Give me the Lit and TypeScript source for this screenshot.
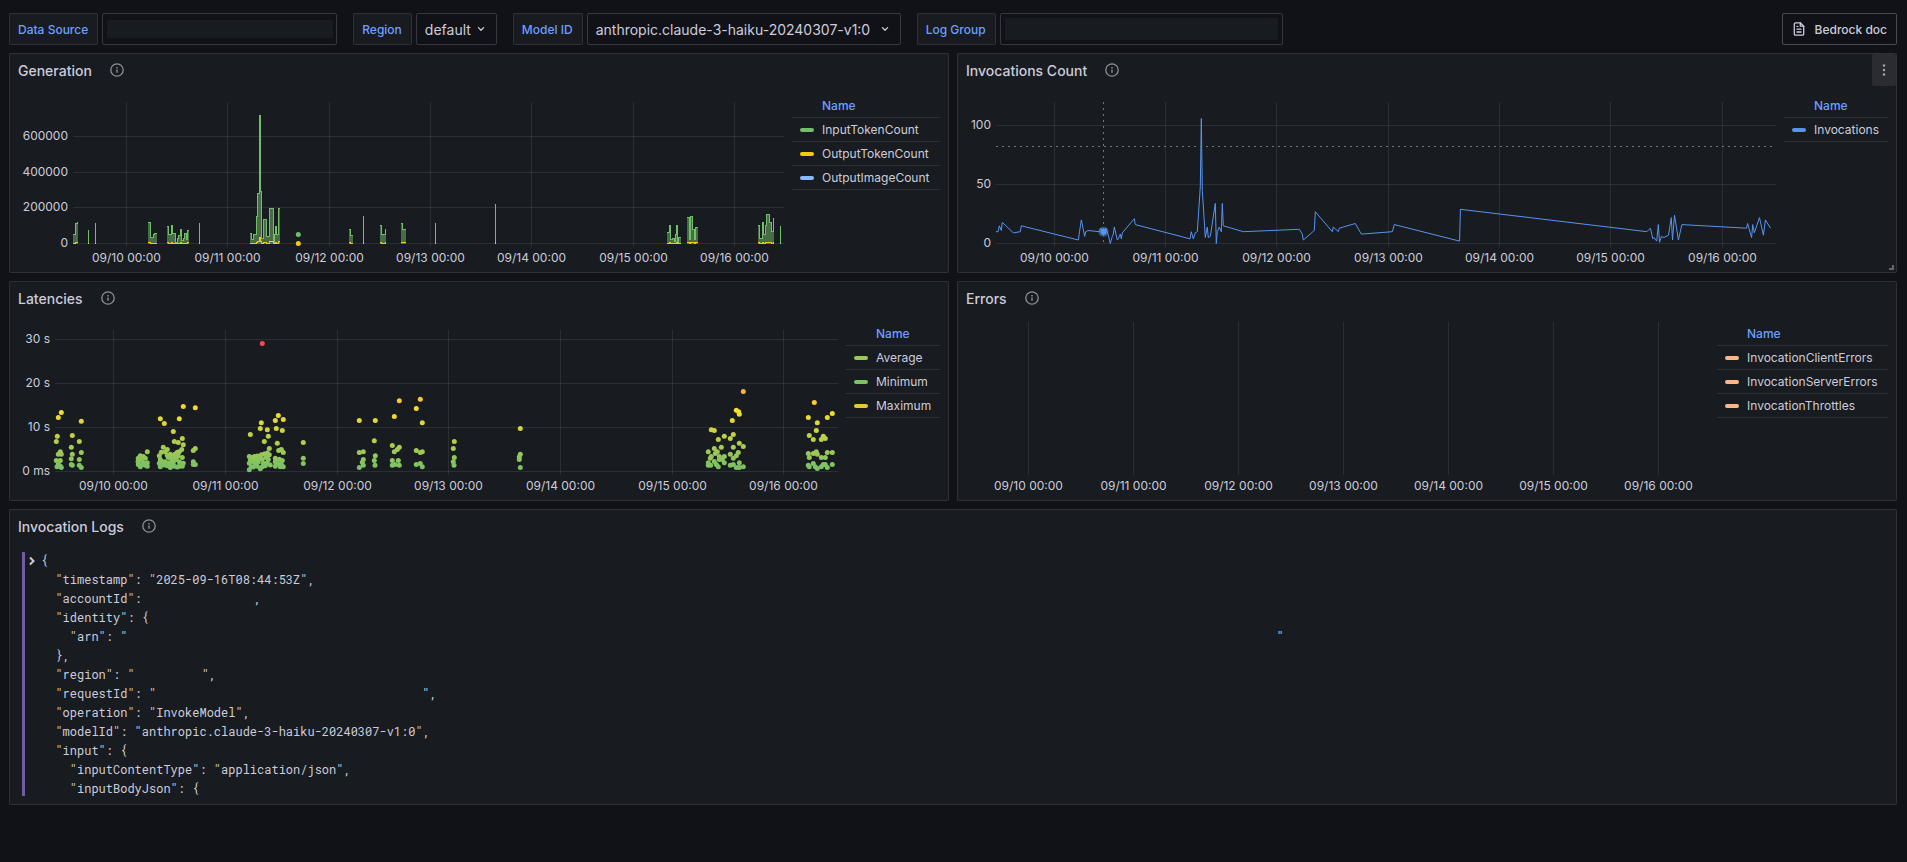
import { LitElement, html, svg, css, nothing } from "lit";
import { customElement, property, state } from "lit/decorators.js";
import { styleMap } from "lit/directives/style-map.js";

type Point = [number, number];

interface Series {
  name: string;
  color: string;
}

interface Tick {
  value: number;
  label: string;
}

interface ChartSpec {
  kind: "steps" | "line" | "points" | "empty";
  span: number;
  max: number;
  gutter: number;
  yTicks: Tick[];
}

const DAYS = ["09/10", "09/11", "09/12", "09/13", "09/14", "09/15", "09/16"];
const RANGE_DAYS = 7.01;
const FIRST_MIDNIGHT = 0.525;

/* Token counts, in thousands: each run is a list of [start, value] steps. */
const TOKEN_RUNS: { steps: Point[]; end: number }[] = [
  { steps: [[0, 50], [2.3, 112], [4, 120]], end: 4.6 },
  { steps: [[15.3, 75]], end: 15.3 },
  { steps: [[22.5, 114]], end: 22.5 },
  { steps: [[75.3, 118], [77.7, 34], [80.3, 49], [81.7, 56]], end: 83.7 },
  {
    steps: [
      [94.3, 96], [95.7, 50], [98.3, 101], [99.7, 56], [102.7, 5], [104.3, 30], [105.3, 45],
      [107, 79], [108.3, 18], [110.7, 30], [111.3, 56], [113, 22], [114.3, 73],
    ],
    end: 115.7,
  },
  { steps: [[126.3, 114]], end: 126.3 },
  {
    steps: [
      [177.3, 56], [178.7, 22], [180.3, 50], [183, 154], [184.3, 281], [186.3, 719], [187.7, 292],
      [188.7, 30], [190.3, 135], [193.7, 41], [196.3, 197], [200.7, 5], [201.7, 50], [202.3, 96],
      [203.7, 50], [205.3, 197],
    ],
    end: 206.7,
  },
  { steps: [[276, 79], [277, 45]], end: 279.7 },
  { steps: [[290.3, 154]], end: 290.3 },
  { steps: [[307, 101], [308.7, 50], [312.3, 79]], end: 313 },
  { steps: [[328, 114], [329, 79]], end: 332.7 },
  { steps: [[362.3, 118]], end: 362.3 },
  { steps: [[422.5, 221]], end: 422.5 },
  {
    steps: [
      [594.3, 60], [596.3, 101], [597.7, 22], [599.3, 28], [601, 13], [602.3, 50], [603.3, 101],
      [604.7, 8], [605.7, 34],
    ],
    end: 607.7,
  },
  { steps: [[614.3, 146], [616.3, 20], [617, 152], [619.7, 79], [621.7, 20], [622.7, 90]], end: 624.7 },
  {
    steps: [
      [685.3, 101], [686.7, 28], [689.3, 118], [690.7, 50], [692.3, 101], [693.3, 163],
      [696.7, 118], [698.7, 67], [700, 140],
    ],
    end: 700.7,
  },
  { steps: [[707.3, 101]], end: 707.3 },
];

const LONE_SAMPLE: Point = [225.3, 50];
const OUTPUT_RATIO = 0.045;

const INVOCATIONS: Point[] = [
  [0, 10], [2, 10], [3.3, 15], [5.3, 11], [6.3, 18], [17.3, 9], [24.3, 10], [25.3, 15], [82.3, 3],
  [85.3, 20], [88.7, 6], [89.7, 10], [92, 11], [103.3, 10], [104.7, 13], [107.7, 10], [110, 13],
  [112, 8], [114.3, 0], [116.3, 6], [117.3, 8], [118.3, 14], [121.3, 3], [122.3, 4], [124.3, 8],
  [125.3, 4], [126.3, 9], [138.3, 21], [139.3, 16], [194, 4], [195.3, 10], [197.3, 4], [199.3, 9],
  [201.3, 10], [204.3, 48], [205.3, 106], [206.3, 45], [209.3, 5], [211.3, 14], [212.3, 5],
  [214.3, 6], [219.3, 34], [220.3, 0], [221.3, 10], [223.3, 14], [225.3, 10], [226.3, 34],
  [227.3, 15], [247.3, 10], [303.3, 12], [306.3, 8], [307.3, 3], [318.3, 11], [319.3, 27],
  [336.3, 10], [337.3, 14], [342.3, 10], [343.3, 13], [359.3, 17], [365.3, 8], [396.3, 10],
  [398.3, 16], [463.6, 2], [464.4, 29], [650.9, 10], [654.4, 13], [656.8, 4], [658, 5],
  [660.7, 2], [662.3, 16], [663.5, 1], [665.5, 6], [667.8, 5], [672.5, 7], [675.3, 22],
  [676.5, 3], [678.5, 24], [682.4, 3], [685.9, 16], [750.5, 13], [751.6, 17], [755.6, 5],
  [756.7, 16], [758.3, 9], [763.5, 22], [767.4, 7], [769.4, 20], [774.5, 13],
];

const HOVERED: Point = [107.7, 10];
const CURSOR_LEVEL = 82;

/* Latency samples, in seconds. */
const LATENCIES: Point[] = [
  [6.3, 13.4], [3.3, 12.3], [26.3, 11.4], [2.3, 8], [1.3, 6.8], [17.3, 8.2], [24.3, 6.8],
  [16.3, 5.5], [5.3, 4.5], [3.3, 3.9], [6.3, 3.9], [17.3, 3.9], [26.3, 4.3], [1.3, 2.5],
  [5.3, 2.5], [16.3, 2.9], [24.3, 2.7], [2, 1.1], [3.3, 1.7], [5.3, 1.2], [6.3, 0.9],
  [16.3, 1.6], [17.3, 1.4], [24.3, 1.4], [26.3, 0.9],
  [92.3, 4.5], [85.3, 3.6], [88.3, 3.4], [83.3, 3], [90.3, 3], [86.3, 2.6], [83, 2.3],
  [92.3, 2], [88.3, 2], [83.3, 1.6], [86.3, 1.5], [90.3, 1.4], [85.3, 1.1], [92.3, 1.2],
  [105.3, 12], [109.3, 10.9], [124.3, 12], [128.3, 14.8], [140.3, 14.5], [118.3, 9.1],
  [127.3, 7.5], [119.3, 6.8], [123.3, 6.6], [128.3, 6.1], [108.3, 5.5], [112.3, 5],
  [140.3, 5.2], [138.3, 4.8], [126.7, 5], [106.3, 4.4], [110.3, 4.5], [122.3, 4.4],
  [124.3, 4.5], [104.3, 3.6], [112.3, 3.7], [115.3, 3.9], [118.3, 3.7], [120.3, 4], [113.3, 3.2],
  [116.3, 3.2], [119.3, 3.1], [123.3, 3.5], [127.3, 3.2], [105.3, 2.7], [117.3, 2.6],
  [121.3, 2.7], [104.3, 1.9], [107.3, 2.2], [110.3, 2.2], [114.3, 2], [118.3, 2.1], [124.3, 2.2],
  [126.3, 1.7], [128.3, 1.9], [105.3, 1.1], [106.3, 1.5], [109.3, 1.5], [112.3, 1.3],
  [115.3, 0.9], [116.3, 1.6], [119.3, 1.2], [122.3, 1], [124.3, 1.2], [127.3, 1.2],
  [138.3, 2.2], [138.3, 1.6], [140.3, 1.6],
  [207.3, 29.1], [223.3, 12.7], [220.3, 11.6], [228.3, 11.8], [206.3, 11.1], [205.3, 9.8],
  [212.3, 9.5], [221.3, 9.8], [227.3, 9.3], [195.3, 8.4], [213.3, 8], [209.3, 6.8],
  [222.3, 6.4], [214.3, 5.2], [226.3, 5], [223.7, 4.8], [228.3, 4.3], [248.3, 6.6],
  [248.3, 3], [248.3, 1.8], [194.3, 3.4], [197.3, 3.2], [199.3, 3.4], [202.3, 3.5],
  [206.3, 3.8], [209.3, 4], [212.3, 4.2], [214.3, 3.8], [195.3, 2.5], [198.3, 2.3], [201.3, 2.7],
  [204.3, 3], [207.3, 2.8], [211.3, 3.2], [213.3, 2.7], [194.3, 1.9], [200.3, 1.8], [203.3, 2.2],
  [208.3, 1.9], [212.3, 2], [215.3, 1.5], [220.3, 3], [220.3, 2.2], [224.3, 2.8], [227.3, 2.5],
  [196.3, 1.1], [198.3, 1], [202.3, 1.2], [205.3, 0.6], [207.3, 1.1], [210.3, 1.3], [194.3, 0.4],
  [220.3, 1.2], [223.3, 1.8], [225.3, 1.1], [226.3, 1.6], [228.3, 1.1],
  [304.3, 11.6], [320.3, 11.6], [319.3, 7], [304.3, 4.3], [308.3, 4.5], [320.3, 3.6],
  [308.3, 2.7], [307.3, 2.1], [319.3, 2.5], [304.3, 0.9], [308.3, 1.4], [320, 1.4],
  [344.3, 16.1], [339.3, 12.5], [365.3, 16.4], [361.3, 14.3], [367.3, 11.1], [337.3, 5.9],
  [344.3, 5.5], [342.3, 5], [339.3, 4.5], [337.3, 2.5], [343.3, 2.5], [337.3, 1.4],
  [340, 1.6], [344.3, 1.4], [361.3, 4.8], [365.3, 4.3], [367.3, 4.5], [361.3, 1.6],
  [365.3, 1.8], [367.3, 1.1],
  [399.3, 6.8], [398.3, 5.2], [399.3, 3.2], [398.3, 2.2], [399, 1.4],
  [465.3, 9.8], [465.3, 3.9], [464.3, 3.3], [464.3, 2.7], [465.3, 0.9],
  [688.3, 18.2], [681.3, 13.9], [683.7, 13.6], [684.3, 13], [677.3, 11.6], [656.3, 9.5],
  [659.3, 9.3], [678.3, 8.4], [669.3, 8], [675.3, 7.5], [663.3, 7.3], [684.3, 6.4],
  [688.3, 5.7], [666.3, 5.5], [678.3, 5.5], [659.3, 5.2], [653.3, 4.5], [662.3, 4.5],
  [683.3, 4.3], [660.3, 4.1], [675.3, 3.9], [681.3, 3.6], [656.3, 3.4], [664.3, 3.4],
  [669.3, 3.4], [678.3, 3], [664.3, 2.7], [667.3, 2.7], [655.3, 3], [659.3, 2.3], [653.3, 2],
  [669.3, 2], [684.3, 2], [655.7, 1.4], [653.3, 1.4], [661.3, 1.6], [663.3, 1.1], [675.3, 1.4],
  [678.3, 1.6], [681.3, 0.9], [684.3, 0.9], [688.3, 1.1],
  [759.3, 15.7], [753.3, 12.3], [772.3, 12.3], [777.3, 13.2], [762.3, 11.1], [761.3, 9.3],
  [754.3, 8.2], [758.3, 7.3], [768.3, 8], [766.3, 7.3], [770.3, 7.5], [753.3, 4.1],
  [754.3, 3.2], [758.3, 4.1], [761.3, 4.5], [762.3, 3.9], [766.3, 3.2], [770.3, 3.2],
  [772.3, 4.3], [777.3, 4.3], [753.3, 1.4], [754.3, 1.1], [758.3, 1.8], [760.3, 1.1],
  [762.3, 0.7], [766.3, 1.1], [768.3, 1.6], [770.3, 1.6], [772.3, 0.9], [777.3, 1.6],
];

const HEAT_STOPS: [number, [number, number, number]][] = [
  [0, [115, 191, 105]],
  [14, [250, 222, 42]],
  [18, [255, 179, 57]],
  [29, [242, 73, 92]],
];

function heatColor(seconds: number): string {
  const last = HEAT_STOPS[HEAT_STOPS.length - 1];
  if (seconds >= last[0]) return `rgb(${last[1].join(",")})`;
  const i = HEAT_STOPS.findIndex(([at]) => at > seconds);
  const [fromAt, from] = HEAT_STOPS[i - 1];
  const [toAt, to] = HEAT_STOPS[i];
  const f = (seconds - fromAt) / (toAt - fromAt);
  return `rgb(${from.map((c, k) => Math.round(c + (to[k] - c) * f)).join(",")})`;
}

/* A string is printed as it is; a number is the width of a value left blank. */
const LOG_LINES: (string | number)[][] = [
  ["{"],
  ['  "timestamp": "2025-09-16T08:44:53Z",'],
  ['  "accountId":', 112, ","],
  ['  "identity": {'],
  ['    "arn": "', 1149, '"'],
  ["  },"],
  ['  "region": "', 67, '",'],
  ['  "requestId": "', 266, '",'],
  ['  "operation": "InvokeModel",'],
  ['  "modelId": "anthropic.claude-3-haiku-20240307-v1:0",'],
  ['  "input": {'],
  ['    "inputContentType": "application/json",'],
  ['    "inputBodyJson": {'],
];

@customElement("time-chart")
class TimeChart extends LitElement {
  @property({ attribute: false }) spec!: ChartSpec;
  @state() private width = 0;

  private observer = new ResizeObserver(([entry]) => {
    this.width = Math.round(entry.contentRect.width);
  });

  static styles = css`
    :host {
      display: block;
      flex: 1;
      min-width: 0;
      height: 170px;
    }
    svg {
      display: block;
      width: 100%;
      height: 100%;
      overflow: hidden;
    }
    text {
      font-family: Inter, sans-serif;
      font-size: 12px;
      fill: #ccccdc;
    }
    .grid {
      stroke: rgba(240, 250, 255, 0.09);
      stroke-width: 1;
      shape-rendering: crispEdges;
    }
    .fill {
      fill: #73bf69;
      fill-opacity: 0.5;
      shape-rendering: crispEdges;
    }
    .outline {
      fill: none;
      stroke: #73bf69;
      stroke-width: 1;
      shape-rendering: crispEdges;
    }
    .output {
      stroke: #f2cc0c;
    }
    .trend {
      fill: none;
      stroke: #5794f2;
      stroke-width: 1;
      stroke-linejoin: bevel;
    }
    .cursor {
      stroke: #607d84;
      stroke-width: 1;
      stroke-dasharray: 2 4;
      shape-rendering: crispEdges;
    }
    .halo {
      fill: #5794f2;
      fill-opacity: 0.5;
    }
    .marker {
      fill: #5794f2;
    }
  `;

  connectedCallback() {
    super.connectedCallback();
    this.observer.observe(this);
  }

  disconnectedCallback() {
    this.observer.disconnect();
    super.disconnectedCallback();
  }

  private get plot() {
    const left = this.spec.gutter;
    return { left, right: this.width, top: this.spec.yTicks.length ? 8 : 0, bottom: 149.5 };
  }

  private x = (v: number) => {
    const { left, right } = this.plot;
    return left + (v / this.spec.span) * (right - left);
  };

  private y = (v: number) => {
    const { bottom } = this.plot;
    return bottom - (v / this.spec.max) * (bottom - 8);
  };

  private path(points: Point[]) {
    return points.map(([px, py], i) => `${i ? "L" : "M"}${px.toFixed(1)} ${py.toFixed(1)}`).join("");
  }

  private outline(steps: Point[], end: number, ratio: number) {
    const out: Point[] = [];
    if (steps.length === 1) {
      const px = Math.floor(this.x(steps[0][0])) + 0.5;
      return this.path([[px, this.y(0) + 0.5], [px, this.y(steps[0][1] * ratio)]]);
    }
    steps.forEach(([start, value], i) => {
      const next = i + 1 < steps.length ? steps[i + 1][0] : end;
      out.push([this.x(start), this.y(value * ratio)], [this.x(next), this.y(value * ratio)]);
    });
    return this.path(out);
  }

  private renderSteps() {
    const base = this.y(0);
    return svg`
      ${TOKEN_RUNS.map(({ steps, end }) => {
        const shape = this.outline(steps, end, 1);
        return svg`
          ${steps.length > 1
            ? svg`<path class="fill" d="${shape}L${this.x(end)} ${base}L${this.x(steps[0][0])} ${base}Z"></path>`
            : nothing}
          <path class="outline" d=${shape}></path>
          <path class="outline output" d=${this.outline(steps, end, OUTPUT_RATIO)}></path>`;
      })}
      <circle cx=${this.x(LONE_SAMPLE[0])} cy=${this.y(LONE_SAMPLE[1])} r="2.5" fill="#73bf69"></circle>
      <circle cx=${this.x(LONE_SAMPLE[0])} cy=${base} r="2.5" fill="#f2cc0c"></circle>`;
  }

  private renderLine() {
    const { left, right, top, bottom } = this.plot;
    const cx = Math.floor(this.x(HOVERED[0])) + 0.5;
    const cy = Math.floor(this.y(CURSOR_LEVEL)) + 0.5;
    return svg`
      <path class="trend" d=${this.path(INVOCATIONS.map(([t, v]) => [this.x(t), this.y(v)] as Point))}></path>
      <line class="cursor" x1=${left} x2=${right} y1=${cy} y2=${cy}></line>
      <line class="cursor" x1=${cx} x2=${cx} y1=${top} y2=${bottom}></line>
      <circle class="halo" cx=${cx} cy=${this.y(HOVERED[1])} r="5"></circle>
      <circle class="marker" cx=${cx} cy=${this.y(HOVERED[1])} r="3"></circle>`;
  }

  private renderPoints() {
    return LATENCIES.map(
      ([t, v]) => svg`<circle cx=${this.x(t)} cy=${this.y(v)} r="2.5" fill=${heatColor(v)}></circle>`,
    );
  }

  render() {
    if (!this.width) return html`<svg></svg>`;
    const { left, right, top } = this.plot;
    const { kind, yTicks } = this.spec;
    return html`<svg>
      ${yTicks.map(({ value, label }) => {
        const ty = Math.floor(this.y(value)) + 0.5;
        return svg`
          <line class="grid" x1=${left} x2=${right} y1=${ty} y2=${ty}></line>
          <text x=${left - 5} y=${ty + 3.5} text-anchor="end">${label}</text>`;
      })}
      ${DAYS.map((day, i) => {
        const tx = left + ((FIRST_MIDNIGHT + i) / RANGE_DAYS) * (right - left);
        const lx = Math.floor(tx) + 0.5;
        return svg`
          <line class="grid" x1=${lx} x2=${lx} y1=${top} y2="153"></line>
          <text x=${lx} y="168" text-anchor="middle">${day} 00:00</text>`;
      })}
      ${kind === "steps" ? this.renderSteps() : nothing}
      ${kind === "line" ? this.renderLine() : nothing}
      ${kind === "points" ? this.renderPoints() : nothing}
    </svg>`;
  }
}

@customElement("series-legend")
class SeriesLegend extends LitElement {
  @property({ attribute: false }) series: Series[] = [];

  static styles = css`
    :host {
      display: block;
      flex: none;
    }
    table {
      width: 100%;
      border-collapse: collapse;
      font: 12px/18px Inter, sans-serif;
      color: #ccccdc;
    }
    th,
    td {
      height: 23px;
      padding: 0 8px;
      border-bottom: 1px solid rgba(204, 204, 220, 0.12);
      text-align: left;
      white-space: nowrap;
    }
    th {
      padding-left: 30px;
      font-weight: 500;
      color: #6e9fff;
    }
    button {
      display: flex;
      align-items: center;
      gap: 8px;
      padding: 0;
      border: 0;
      background: none;
      font: inherit;
      color: inherit;
      cursor: pointer;
    }
    .swatch {
      width: 14px;
      height: 4px;
      border-radius: 2px;
    }
  `;

  render() {
    return html`<table>
      <thead>
        <tr>
          <th scope="col">Name</th>
        </tr>
      </thead>
      <tbody>
        ${this.series.map(
          ({ name, color }) => html`<tr>
            <td>
              <button type="button">
                <span class="swatch" style=${styleMap({ background: color })}></span>${name}
              </button>
            </td>
          </tr>`,
        )}
      </tbody>
    </table>`;
  }
}

@customElement("dash-panel")
class DashPanel extends LitElement {
  @property() heading = "";
  @property({ type: Boolean }) hovered = false;

  static styles = css`
    :host {
      display: flex;
      flex-direction: column;
      position: relative;
      box-sizing: border-box;
      min-width: 0;
      border: 1px solid rgba(204, 204, 220, 0.12);
      border-radius: 2px;
      background: #181b1f;
    }
    header {
      display: flex;
      align-items: center;
      gap: 17px;
      height: 32px;
      padding-left: 8px;
    }
    h2 {
      margin: 0;
      padding-top: 2px;
      font: 500 14px/22px Inter, sans-serif;
      color: #ccccdc;
    }
    .info {
      width: 16px;
      height: 16px;
      fill: none;
      stroke: #8e8f9b;
    }
    .menu {
      display: grid;
      place-items: center;
      width: 24px;
      height: 32px;
      margin-left: auto;
      padding: 0;
      border: 0;
      border-radius: 2px;
      background: #2b2c32;
      cursor: pointer;
    }
    .menu svg {
      width: 16px;
      height: 16px;
      fill: #a5a6b3;
    }
    .body {
      display: flex;
      gap: 8px;
      padding: 8px;
      min-width: 0;
    }
    .corner {
      position: absolute;
      right: 2px;
      bottom: 2px;
      box-sizing: border-box;
      width: 5px;
      height: 5px;
      border-right: 2px solid #63656c;
      border-bottom: 2px solid #63656c;
    }
  `;

  render() {
    return html`
      <header>
        <h2>${this.heading}</h2>
        <svg class="info" viewBox="0 0 16 16" aria-hidden="true">
          <circle cx="8" cy="8" r="6.2" stroke-width="1.3"></circle>
          <path d="M8 7.6v3.2M8 5v1.4" stroke-width="1.4"></path>
        </svg>
        ${this.hovered
          ? html`<button class="menu" type="button" aria-label="Menu">
              <svg viewBox="0 0 16 16" aria-hidden="true">
                <circle cx="8" cy="3.5" r="1.2"></circle>
                <circle cx="8" cy="8" r="1.2"></circle>
                <circle cx="8" cy="12.5" r="1.2"></circle>
              </svg>
            </button>`
          : nothing}
      </header>
      <div class="body"><slot></slot></div>
      ${this.hovered ? html`<span class="corner"></span>` : nothing}
    `;
  }
}

const SECOND_TICKS: Tick[] = [
  { value: 0, label: "0 ms" },
  { value: 10, label: "10 s" },
  { value: 20, label: "20 s" },
  { value: 30, label: "30 s" },
];

const CHARTS: { title: string; legendWidth: number; hovered?: boolean; spec: ChartSpec; series: Series[] }[] = [
  {
    title: "Generation",
    legendWidth: 148,
    spec: {
      kind: "steps",
      span: 711,
      max: 795,
      gutter: 55,
      yTicks: [0, 200, 400, 600].map((value) => ({ value, label: String(value * 1000) })),
    },
    series: [
      { name: "InputTokenCount", color: "#73bf69" },
      { name: "OutputTokenCount", color: "#f2cc0c" },
      { name: "OutputImageCount", color: "#8ab8ff" },
    ],
  },
  {
    title: "Invocations Count",
    legendWidth: 104,
    hovered: true,
    spec: {
      kind: "line",
      span: 780,
      max: 120,
      gutter: 30,
      yTicks: [0, 50, 100].map((value) => ({ value, label: String(value) })),
    },
    series: [{ name: "Invocations", color: "#5794f2" }],
  },
  {
    title: "Latencies",
    legendWidth: 94,
    spec: { kind: "points", span: 783, max: 32.16, gutter: 37, yTicks: SECOND_TICKS },
    series: [
      { name: "Average", color: "#9ac958" },
      { name: "Minimum", color: "#7dc166" },
      { name: "Maximum", color: "#dfc93c" },
    ],
  },
  {
    title: "Errors",
    legendWidth: 171,
    spec: { kind: "empty", span: 736, max: 1, gutter: 7, yTicks: [] },
    series: ["InvocationClientErrors", "InvocationServerErrors", "InvocationThrottles"].map((name) => ({
      name,
      color: "#ffb78a",
    })),
  },
];

@customElement("app-root")
class AppRoot extends LitElement {
  static styles = css`
    :host {
      display: block;
      box-sizing: border-box;
      min-height: 100vh;
      padding: 13px 10px 57px 9px;
      background: #111217;
      font-family: Inter, sans-serif;
      color: #ccccdc;
    }
    .toolbar {
      display: flex;
      flex-wrap: wrap;
      gap: 8px 16px;
      margin-bottom: 8px;
    }
    .variable {
      display: flex;
      gap: 4px;
    }
    label {
      box-sizing: border-box;
      height: 32px;
      padding: 0 9px 0 8px;
      border: 1px solid rgba(204, 204, 220, 0.12);
      border-radius: 2px;
      background: #181b1f;
      font-size: 12px;
      font-weight: 500;
      line-height: 31px;
      color: #6e9fff;
      white-space: nowrap;
    }
    .field {
      display: flex;
      align-items: center;
      justify-content: center;
      position: relative;
      box-sizing: border-box;
      height: 32px;
      border: 1px solid rgba(204, 204, 220, 0.2);
      border-radius: 2px;
    }
    .field.source {
      width: 235px;
    }
    .field.group {
      width: 283px;
    }
    .field.region {
      width: 81px;
    }
    .field.model {
      width: 314px;
    }
    input {
      box-sizing: border-box;
      width: 226px;
      height: 18px;
      padding: 0;
      border: 0;
      background: #181b1f;
      font: 14px Inter, sans-serif;
      color: inherit;
    }
    .group input {
      width: 273px;
      height: 22px;
    }
    select {
      appearance: none;
      width: 100%;
      height: 100%;
      padding: 0 8px;
      border: 0;
      background: none;
      font: 14px Inter, sans-serif;
      color: inherit;
    }
    .chevron {
      position: absolute;
      top: 7px;
      right: 7px;
      width: 16px;
      height: 16px;
      fill: none;
      stroke: #ccccdc;
      stroke-width: 1.3;
      stroke-linecap: round;
      stroke-linejoin: round;
      pointer-events: none;
    }
    .doc {
      display: flex;
      align-items: center;
      gap: 8px;
      box-sizing: border-box;
      height: 32px;
      margin-left: auto;
      padding: 0 9px 0 8px;
      border: 1px solid rgba(204, 204, 220, 0.3);
      border-radius: 2px;
      font-size: 12px;
      font-weight: 500;
      color: inherit;
      text-decoration: none;
    }
    .doc svg {
      width: 16px;
      height: 16px;
      fill: none;
      stroke: #ccccdc;
      stroke-width: 1.3;
      stroke-linejoin: round;
      stroke-linecap: round;
    }
    .panels {
      display: grid;
      grid-template-columns: repeat(2, minmax(0, 1fr));
      gap: 8px;
    }
    .wide {
      grid-column: 1 / -1;
    }
    .log {
      display: flex;
      flex: 1;
      min-width: 0;
      height: 244px;
      margin: 2px 0 0 4px;
      overflow: hidden;
      border-left: 3px solid #705da0;
    }
    .expand {
      display: flex;
      align-items: center;
      height: 18px;
      margin: 0 4px 0 3px;
      padding: 0;
      border: 0;
      background: none;
    }
    .expand svg {
      width: 9px;
      height: 10px;
      fill: none;
      stroke: #ccccdc;
      stroke-width: 2;
    }
    pre {
      margin: -1px 0 0;
      font: 12px/19px "Roboto Mono", "Liberation Mono", monospace;
    }
    .blank {
      display: inline-block;
    }
  `;

  private chevron() {
    return html`<svg class="chevron" viewBox="0 0 16 16" aria-hidden="true">
      <path d="M5.4 6.6 8 9.2l2.6-2.6"></path>
    </svg>`;
  }

  render() {
    return html`
      <div class="toolbar">
        <div class="variable">
          <label for="source">Data Source</label>
          <div class="field source"><input id="source" type="text" readonly /></div>
        </div>
        <div class="variable">
          <label for="region">Region</label>
          <div class="field region">
            <select id="region">
              <option>default</option>
            </select>
            ${this.chevron()}
          </div>
        </div>
        <div class="variable">
          <label for="model">Model ID</label>
          <div class="field model">
            <select id="model">
              <option>anthropic.claude-3-haiku-20240307-v1:0</option>
            </select>
            ${this.chevron()}
          </div>
        </div>
        <div class="variable">
          <label for="group">Log Group</label>
          <div class="field group"><input id="group" type="text" readonly /></div>
        </div>
        <a class="doc" href="#">
          <svg viewBox="0 0 16 16" aria-hidden="true">
            <path d="M9.3 1.8H4.6c-.8 0-1.3.5-1.3 1.3v9.8c0 .8.5 1.3 1.3 1.3h6.8c.8 0 1.3-.5 1.3-1.3V5.2z"></path>
            <path d="M9.3 1.8v3.4h3.4M6 8.2h4M6 11h4M6 5.4h.8"></path>
          </svg>
          Bedrock doc
        </a>
      </div>
      <main class="panels">
        ${CHARTS.map(
          ({ title, legendWidth, hovered, spec, series }) => html`<dash-panel
            .heading=${title}
            .hovered=${!!hovered}
          >
            <time-chart .spec=${spec}></time-chart>
            <series-legend .series=${series} style=${styleMap({ width: `${legendWidth}px` })}></series-legend>
          </dash-panel>`,
        )}
        <dash-panel class="wide" .heading=${"Invocation Logs"}>
          <div class="log">
            <button class="expand" type="button" aria-label="Show details">
              <svg viewBox="0 0 9 10" aria-hidden="true"><path d="M2 1.5 5.5 5 2 8.5"></path></svg>
            </button>
            <pre>${LOG_LINES.map((parts, i) => [
                i ? "\n" : "",
                parts.map((part) =>
                  typeof part === "number"
                    ? html`<span class="blank" style=${styleMap({ width: `${part}px` })}></span>`
                    : part,
                ),
              ])}</pre>
          </div>
        </dash-panel>
      </main>
    `;
  }
}
